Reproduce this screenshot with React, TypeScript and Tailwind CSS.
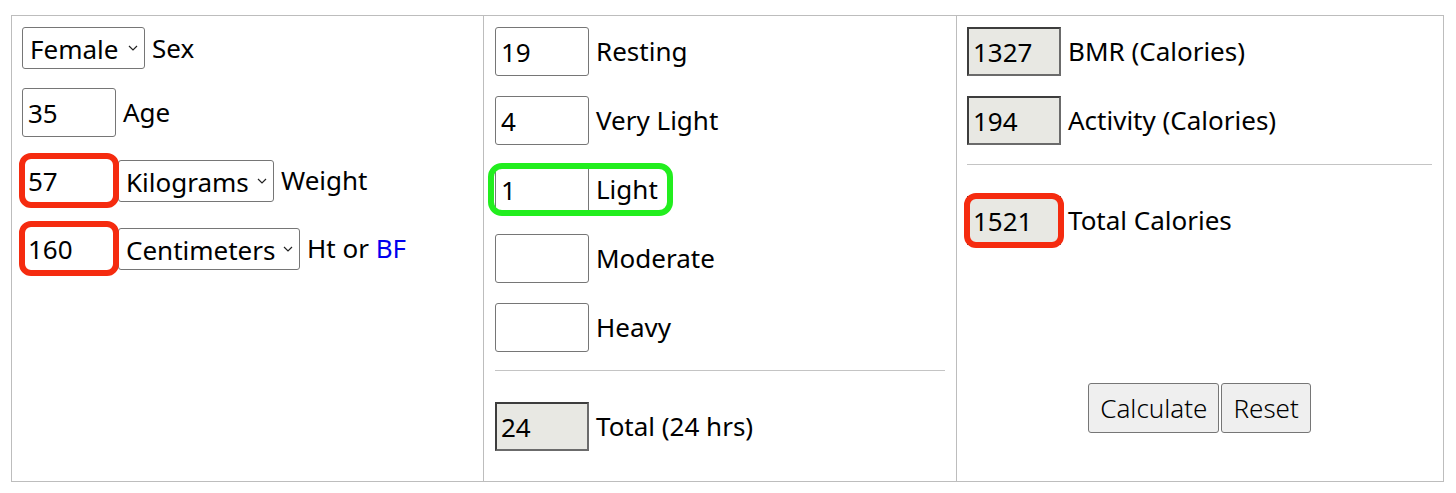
import React from "react";

const font = { fontFamily: '"Noto Sans", "Open Sans", sans-serif' };

function Chevron() {
  return (
    <svg width="10" height="6" viewBox="0 0 10 6" className="shrink-0">
      <path d="M1 1l4 4 4-4" fill="none" stroke="#222" strokeWidth="1.2" />
    </svg>
  );
}

function Select({ value, width }: { value: string; width: string }) {
  return (
    <div
      className={`flex h-[42px] items-center justify-between rounded-[3px] border border-[#767676] bg-white pl-[7px] pr-[6px] text-[26px] leading-none text-black ${width}`}
    >
      <span className="relative top-[1px]">{value}</span>
      <Chevron />
    </div>
  );
}

function Field({ value, ro }: { value?: string; ro?: boolean }) {
  return (
    <input
      readOnly
      value={value ?? ""}
      style={font}
      className={
        ro
          ? "h-[49px] w-[94px] border-2 border-[#3d3d3d] border-b-[#6b6b6b] border-r-[#6b6b6b] bg-[#e8e8e3] pl-[4px] text-[26px] text-black outline-none"
          : "h-[49px] w-[94px] rounded-[3px] border border-[#767676] bg-white pl-[5px] text-[26px] text-black outline-none"
      }
    />
  );
}

function Marked({ children }: { children: React.ReactNode }) {
  return (
    <div className="relative">
      {children}
      <span className="pointer-events-none absolute -inset-[3px] rounded-[12px] border-[6px] border-[#f52b0f]" />
    </div>
  );
}

function Row({ children }: { children: React.ReactNode }) {
  return <div className="flex items-center gap-[7px]">{children}</div>;
}

export default function App() {
  return (
    <div className="min-h-screen bg-white pl-[11px] pt-[15px] text-black" style={font}>
      <div className="grid h-[467px] w-[1433px] grid-cols-[472px_473px_1fr] border border-[#bdbdbd] text-[26px]">
        {/* Body details */}
        <div className="flex flex-col gap-[19px] border-r border-[#bdbdbd] pl-[10px] pt-[11px]">
          <Row>
            <Select value="Female" width="w-[123px]" />
            <span>Sex</span>
          </Row>
          <Row>
            <Field value="35" />
            <span>Age</span>
          </Row>
          <div className="flex items-center">
            <Marked>
              <Field value="57" />
            </Marked>
            <div className="ml-[2px]">
              <Select value="Kilograms" width="w-[156px]" />
            </div>
            <span className="ml-[7px]">Weight</span>
          </div>
          <div className="flex items-center">
            <Marked>
              <Field value="160" />
            </Marked>
            <div className="ml-[2px]">
              <Select value="Centimeters" width="w-[182px]" />
            </div>
            <span className="ml-[7px]">
              Ht or <span className="text-[#0000ee]">BF</span>
            </span>
          </div>
        </div>

        {/* Activity hours */}
        <div className="flex flex-col border-r border-[#bdbdbd] pl-[11px] pr-[11px] pt-[11px]">
          <div className="flex flex-col gap-[20px]">
            <Row>
              <Field value="19" />
              <span>Resting</span>
            </Row>
            <Row>
              <Field value="4" />
              <span>Very Light</span>
            </Row>
            <div className="relative flex w-fit items-center gap-[7px]">
              <Field value="1" />
              <span className="pr-[12px]">Light</span>
              <span className="pointer-events-none absolute -bottom-[2px] -left-[7px] -right-[3px] -top-[2px] rounded-[14px] border-[6px] border-[#22ee1e]" />
            </div>
            <Row>
              <Field />
              <span>Moderate</span>
            </Row>
            <Row>
              <Field />
              <span>Heavy</span>
            </Row>
          </div>
          <hr className="mt-[18px] border-t border-[#c4c4c4]" />
          <div className="mt-[31px]">
            <Row>
              <Field value="24" ro />
              <span>Total (24 hrs)</span>
            </Row>
          </div>
        </div>

        {/* Results */}
        <div className="flex flex-col pl-[10px] pr-[11px] pt-[11px]">
          <div className="flex flex-col gap-[20px]">
            <Row>
              <Field value="1327" ro />
              <span>BMR (Calories)</span>
            </Row>
            <Row>
              <Field value="194" ro />
              <span>Activity (Calories)</span>
            </Row>
          </div>
          <hr className="mt-[19px] border-t border-[#c4c4c4]" />
          <div className="mt-[31px]">
            <Row>
              <Marked>
                <Field value="1521" ro />
              </Marked>
              <span>Total Calories</span>
            </Row>
          </div>
          <div className="mt-[138px] flex justify-center gap-[2px]">
            <button className="h-[50px] rounded-[3px] border border-[#767676] bg-[#efefef] px-[11px] text-[26px] font-light">
              Calculate
            </button>
            <button className="h-[50px] rounded-[3px] border border-[#767676] bg-[#efefef] px-[11px] text-[26px] font-light">
              Reset
            </button>
          </div>
        </div>
      </div>
    </div>
  );
}
